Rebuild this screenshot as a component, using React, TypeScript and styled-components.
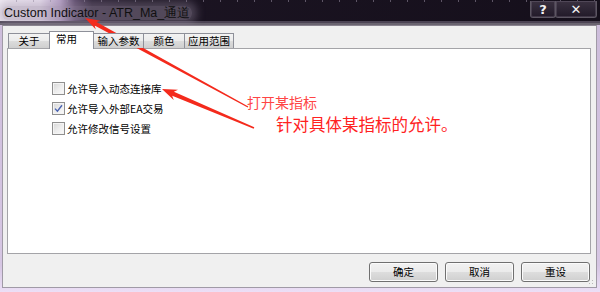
import React from "react";
import styled, { createGlobalStyle } from "styled-components";

const Global = createGlobalStyle`
  html, body { margin: 0; padding: 0; background: #e9dcf3; }
  body { width: 600px; height: 292px; overflow: hidden; }
`;

const UI_FONT = `"Noto Sans CJK SC", "DejaVu Sans", sans-serif`;

const Window = styled.div`
  position: relative;
  width: 600px;
  height: 292px;
  display: flex;
  flex-direction: column;
  background: linear-gradient(90deg, #cdbcdc 0%, #e3d5ee 40%, #d9c6e6 100%);
  overflow: hidden;
`;

const TitleBar = styled.div`
  height: 25px;
  flex: none;
  display: flex;
  align-items: flex-start;
  justify-content: space-between;
  background:
    repeating-linear-gradient(90deg, transparent 0 16px, rgba(150,140,160,0.55) 16px 17px) top / 100% 2px no-repeat,
    linear-gradient(180deg, transparent 0 21px, #4c4454 21px 23px, #6a6470 23px 25px),
    linear-gradient(90deg, #f3eef6 0px, #ece2f2 40px, #b9a3c9 60px, #5d4a6b 75px, #2a1f33 92px, #1b1422 140px, #150f1b 100%);
`;

const TitleText = styled.span`
  margin: 6px 0 0 2px;
  padding: 0 2px;
  font-family: "Liberation Sans", sans-serif;
  font-size: 12.5px;
  line-height: 14px;
  color: #101010;
  background: rgba(150, 138, 160, 0.45);
  border-radius: 6px;
  box-shadow: 0 0 8px 5px rgba(150, 138, 160, 0.4);
`;

const CaptionButtons = styled.div`
  display: flex;
  margin: 1px 3px 0 0;
`;

const CapBtn = styled.div<{ $w: number }>`
  width: ${(p) => p.$w}px;
  height: 17px;
  box-sizing: border-box;
  display: flex;
  align-items: center;
  justify-content: center;
  border: 1px solid #5c5662;
  border-top: none;
  margin-left: -1px;
  background: linear-gradient(180deg, #3a3140 0%, #221a29 100%);
  box-shadow: inset 0 0 0 1px rgba(150, 140, 160, 0.25);
  color: #f2f2f2;
  font-family: "DejaVu Sans", sans-serif;
  font-weight: bold;
  font-size: 13px;
  line-height: 1;
  border-radius: 0 0 3px 3px;
`;

const FrameBody = styled.div`
  flex: 1;
  display: flex;
  padding: 0 3px 4px 2px;
  background: linear-gradient(180deg, #cdbddb 0%, #d6c6e3 90%, #ecdff6 100%);
`;

const Client = styled.div`
  position: relative;
  flex: 1;
  display: flex;
  flex-direction: column;
  border: 1px solid #a09aa6;
  border-top-color: #8a8490;
  background: #f0f0f0;
  font-family: ${UI_FONT};
  font-size: 10.5px;
  color: #000;
`;

const TabStrip = styled.div`
  display: flex;
  align-items: flex-end;
  height: 17px;
  margin: 5px 0 0 5px;
  position: relative;
  z-index: 1;
`;

const Tab = styled.div<{ $w: number; $active?: boolean }>`
  box-sizing: border-box;
  width: ${(p) => p.$w}px;
  height: ${(p) => (p.$active ? 18 : 15)}px;
  margin-left: -1px;
  margin-bottom: ${(p) => (p.$active ? -1 : 0)}px;
  border: 1px solid #8e9099;
  border-bottom: none;
  display: flex;
  align-items: center;
  justify-content: ${(p) => (p.$active ? "flex-start" : "center")};
  padding-left: ${(p) => (p.$active ? 6 : 0)}px;
  padding-bottom: ${(p) => (p.$active ? 3 : 0)}px;
  line-height: 1;
  background: ${(p) =>
    p.$active ? "#ffffff" : "linear-gradient(180deg, #f3f3f3 0%, #ebebeb 50%, #dcdcdc 51%, #cfcfcf 100%)"};
  position: relative;
  z-index: ${(p) => (p.$active ? 2 : 1)};
  &:first-child { margin-left: 0; }
`;

const Panel = styled.div`
  box-sizing: border-box;
  height: 206px;
  margin: 0 5px 0 4px;
  border: 1px solid #a4a4a8;
  background: #ffffff;
  padding: 33px 0 0 44px;
  display: flex;
  flex-direction: column;
  gap: 7px;
`;

const CheckRow = styled.label`
  display: flex;
  align-items: center;
  gap: 2px;
  height: 13px;
  line-height: 13px;
`;

const Box = styled.span`
  box-sizing: border-box;
  width: 13px;
  height: 13px;
  flex: none;
  border: 1px solid #8f8f8f;
  background: linear-gradient(135deg, #d6d6d6 0%, #ececec 50%, #fbfbfb 100%);
  box-shadow: inset 0 0 0 1px #f4f4f4;
  display: flex;
  align-items: center;
  justify-content: center;
`;

const ButtonRow = styled.div`
  display: flex;
  justify-content: flex-end;
  gap: 7px;
  margin: 8px 6px 0 0;
`;

const Button = styled.div`
  box-sizing: border-box;
  width: 69px;
  height: 20px;
  border: 1px solid #707070;
  border-radius: 3px;
  background: linear-gradient(180deg, #f2f2f2 0%, #ebebeb 48%, #dddddd 52%, #cfcfcf 100%);
  box-shadow: inset 0 0 0 1px #fbfbfb;
  display: flex;
  align-items: center;
  justify-content: center;
  line-height: 1;
`;

const Grip = styled.div`
  position: absolute;
  right: 1px;
  bottom: 1px;
  width: 7px;
  height: 7px;
  background: radial-gradient(circle, #b8b8b8 0.8px, transparent 1px) 0 0 / 3px 3px;
`;

const Overlay = styled.div`
  position: absolute;
  inset: 0;
  pointer-events: none;
`;

const Note = styled.span<{ $x: number; $y: number; $size: number; $color: string }>`
  position: absolute;
  left: ${(p) => p.$x}px;
  top: ${(p) => p.$y}px;
  font-family: "Noto Sans CJK SC", sans-serif;
  font-size: ${(p) => p.$size}px;
  line-height: 1;
  color: ${(p) => p.$color};
  white-space: nowrap;
`;

type Pt = [number, number];

function arrowPoints(tip: Pt, tail: Pt, headLen: number, headHalf: number, neckHalf: number, tailHalf: number) {
  const dx = tail[0] - tip[0];
  const dy = tail[1] - tip[1];
  const len = Math.hypot(dx, dy);
  const ux = dx / len;
  const uy = dy / len;
  const nx = -uy;
  const ny = ux;
  const bx = tip[0] + ux * headLen;
  const by = tip[1] + uy * headLen;
  const nbx = tip[0] + ux * (headLen - 3);
  const nby = tip[1] + uy * (headLen - 3);
  const pts: Pt[] = [
    tip,
    [bx + nx * headHalf, by + ny * headHalf],
    [nbx + nx * neckHalf, nby + ny * neckHalf],
    [tail[0] + nx * tailHalf, tail[1] + ny * tailHalf],
    [tail[0] - nx * tailHalf, tail[1] - ny * tailHalf],
    [nbx - nx * neckHalf, nby - ny * neckHalf],
    [bx - nx * headHalf, by - ny * headHalf],
  ];
  return pts.map((p) => `${p[0].toFixed(1)},${p[1].toFixed(1)}`).join(" ");
}

const tabs = [
  { label: "关于", w: 42 },
  { label: "常用", w: 45, active: true },
  { label: "输入参数", w: 51 },
  { label: "颜色", w: 42 },
  { label: "应用范围", w: 50 },
];

const checks = [
  { label: "允许导入动态连接库", checked: false },
  { label: "允许导入外部EA交易", checked: true },
  { label: "允许修改信号设置", checked: false },
];

export default function App() {
  return (
    <>
      <Global />
      <Window>
        <TitleBar>
          <TitleText>Custom Indicator - ATR_Ma_通道</TitleText>
          <CaptionButtons>
            <CapBtn $w={26}>?</CapBtn>
            <CapBtn $w={42}>✕</CapBtn>
          </CaptionButtons>
        </TitleBar>
        <FrameBody>
          <Client>
            <TabStrip>
              {tabs.map((t) => (
                <Tab key={t.label} $w={t.w} $active={t.active}>
                  {t.label}
                </Tab>
              ))}
            </TabStrip>
            <Panel>
              {checks.map((c) => (
                <CheckRow key={c.label}>
                  <Box>
                    {c.checked && (
                      <svg width="9" height="9" viewBox="0 0 9 9">
                        <path d="M1 4.6 L3.4 7.2 L8 1.2" fill="none" stroke="#4a63b0" strokeWidth="1.4" />
                      </svg>
                    )}
                  </Box>
                  {c.label}
                </CheckRow>
              ))}
            </Panel>
            <ButtonRow>
              <Button>确定</Button>
              <Button>取消</Button>
              <Button>重设</Button>
            </ButtonRow>
            <Grip />
          </Client>
        </FrameBody>
        <Overlay>
          <svg width="600" height="292" viewBox="0 0 600 292">
            <polygon points={arrowPoints([85, 18], [248, 107], 15, 5, 2, 0.7)} fill="#f42a1c" />
            <polygon points={arrowPoints([162, 89], [254, 128], 15, 5.5, 2.2, 0.8)} fill="#f42a1c" />
          </svg>
          <Note $x={247} $y={95} $size={14} $color="#ff4545">打开某指标</Note>
          <Note $x={276} $y={116} $size={16.5} $color="#ff2222">针对具体某指标的允许。</Note>
        </Overlay>
      </Window>
    </>
  );
}
